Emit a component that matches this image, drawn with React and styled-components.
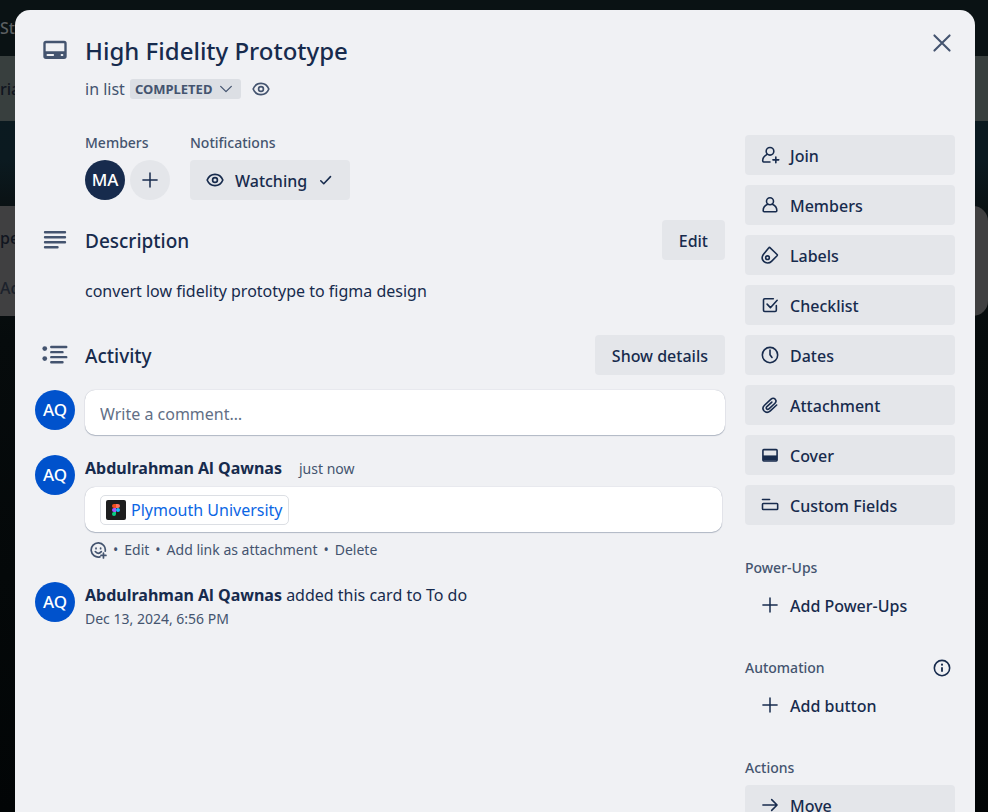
import React from "react";
import styled, { createGlobalStyle, css } from "styled-components";

const Global = createGlobalStyle`
  * { box-sizing: border-box; }
  body {
    margin: 0;
    background: #04090b;
    color: #172b4d;
    font-family: "Noto Sans", "Open Sans", sans-serif;
    font-size: 16px;
    line-height: 24px;
  }
  button, input, textarea { font: inherit; color: inherit; }
  h1, h2, h3, p { margin: 0; }
`;

/* ---------- board behind the dialog ---------- */

const Board = styled.div`
  height: 100vh;
  overflow: hidden;
  display: flex;
  flex-direction: column;
  background: linear-gradient(#0a1a20 0, #0b1a20 160px, #0a1113 210px, #060b0c 340px, #020506 100%);
  color: #10151f;
  font-weight: 500;
`;

const BoardNav = styled.div`
  height: 56px;
  display: flex;
  align-items: center;
  flex-shrink: 0;
  background: #0a1214;
  color: #5b5f61;
`;

const BoardHeader = styled.div`
  height: 65px;
  display: flex;
  align-items: center;
  flex-shrink: 0;
  background: #383f3e;
`;

const Lists = styled.div`
  display: flex;
  margin-top: 85px;
`;

const List = styled.div`
  flex: 1;
  height: 110px;
  display: flex;
  flex-direction: column;
  gap: 26px;
  padding-top: 20px;
  border-radius: 0 15px 15px 0;
  background: #404041;
`;

const ListAdd = styled.span`
  color: #1c222c;
`;

/* ---------- dialog ---------- */

const Backdrop = styled.div`
  position: fixed;
  inset: 0;
  overflow-y: auto;
  scrollbar-width: none;
  padding: 10px 13px 60px 15px;
`;

const Dialog = styled.section`
  max-width: 960px;
  margin: 0 auto;
  padding: 20px;
  border-radius: 15px;
  background: #f0f1f4;
`;

const Header = styled.header`
  display: grid;
  grid-template-columns: 50px 1fr auto;
`;

const IconCell = styled.div`
  width: 40px;
  height: 40px;
  display: flex;
  align-items: center;
  justify-content: center;
  color: #44546f;
`;

const Title = styled.h1`
  font-size: 24px;
  line-height: 30px;
  font-weight: 500;
  padding: 6px 0;
`;

const ListLine = styled.div`
  display: flex;
  align-items: center;
  height: 30px;
  margin-top: 2px;
  gap: 5px;
  color: #44546f;
`;

const ListButton = styled.button`
  display: flex;
  align-items: center;
  gap: 6px;
  height: 20px;
  padding: 0 7px 0 5px;
  border: 0;
  border-radius: 3px;
  background: #dcdfe4;
  color: #44546f;
  font-size: 13px;
  line-height: 20px;
  font-weight: 700;
`;

const IconButton = styled.button`
  display: flex;
  align-items: center;
  justify-content: center;
  width: ${(p) => p.$size}px;
  height: ${(p) => p.$size}px;
  padding: 0;
  border: 0;
  border-radius: 50%;
  background: ${(p) => (p.$filled ? "#e4e6ea" : "transparent")};
  color: ${(p) => (p.$dark ? "#172b4d" : "#44546f")};
`;

const Columns = styled.div`
  display: grid;
  grid-template-columns: minmax(0, 1fr) 210px;
  gap: 20px;
  padding-top: 31px;
`;

const Main = styled.div`
  display: flex;
  flex-direction: column;
`;

const Details = styled.div`
  display: flex;
  gap: 20px;
  padding-left: 50px;
  margin-bottom: 20px;
`;

const Label = styled.h3`
  font-size: 14px;
  line-height: 16px;
  font-weight: 500;
  color: #44546f;
`;

const DetailGroup = styled.div`
  display: flex;
  flex-direction: column;
  gap: 9px;
`;

const Inline = styled.div`
  display: flex;
  gap: 5px;
`;

const Avatar = styled.span`
  display: flex;
  align-items: center;
  justify-content: center;
  width: 40px;
  height: 40px;
  flex-shrink: 0;
  border-radius: 50%;
  background: ${(p) => (p.$navy ? "#172b4d" : "#0052cc")};
  color: #fff;
  font-size: 17px;
  font-weight: 500;
`;

const buttonBase = css`
  display: flex;
  align-items: center;
  gap: 10px;
  height: 40px;
  padding: 2px 15px 0;
  border: 0;
  border-radius: 4px;
  background: #e4e6ea;
  color: #172b4d;
  font-weight: 500;
  white-space: nowrap;
  svg { margin-bottom: 3px; }
`;

const Button = styled.button`
  ${buttonBase}
  ${(p) => p.$wide && "padding: 2px 17px 0;"}
`;

const SideButton = styled.button`
  ${buttonBase}
  width: 100%;
  ${(p) => p.$plain && "background: transparent;"}
`;

const Section = styled.section`
  display: grid;
  grid-template-columns: 50px minmax(0, 1fr);
`;

const SectionHead = styled.div`
  display: flex;
  align-items: center;
  justify-content: space-between;
  min-height: 40px;
`;

const SectionTitle = styled.h2`
  font-size: 19px;
  line-height: 26px;
  font-weight: 500;
  padding-top: 2px;
`;

const Description = styled.p`
  grid-column: 2;
  padding: 19px 0 32px;
`;

const Entry = styled.div`
  display: grid;
  grid-template-columns: 50px minmax(0, 1fr);
  margin-top: ${(p) => p.$top}px;
`;

const CommentInput = styled.input`
  width: 100%;
  height: 45px;
  padding: 2px 15px 0;
  border: 0;
  border-radius: 10px;
  background: #fff;
  box-shadow: 0 1px 1px #091e4240, 0 0 1px #091e424f;
  &::placeholder { color: #626f86; opacity: 1; }
`;

const Byline = styled.p`
  line-height: 27px;
`;

const Name = styled.strong`
  font-weight: 700;
`;

const Time = styled.a`
  display: ${(p) => (p.$block ? "block" : "inline")};
  margin-left: ${(p) => (p.$block ? 0 : 17)}px;
  font-size: 14px;
  line-height: 20px;
  color: #44546f;
  text-decoration: none;
`;

const CommentBox = styled.div`
  display: flex;
  align-items: center;
  height: 45px;
  margin: 5px 3px 0 0;
  padding: 0 15px;
  border-radius: 10px;
  background: #fff;
  box-shadow: 0 1px 1px #091e4240, 0 0 1px #091e424f;
`;

const SmartLink = styled.a`
  display: flex;
  align-items: center;
  gap: 5px;
  height: 30px;
  padding: 0 5px;
  border: 1px solid #dcdfe4;
  border-radius: 5px;
  color: #0c66e4;
  text-decoration: none;
`;

const Actions = styled.div`
  display: flex;
  align-items: center;
  gap: 6px;
  height: 20px;
  margin-top: 8px;
  padding-left: 5px;
  font-size: 14px;
  line-height: 20px;
  color: #44546f;
`;

const TextButton = styled.button`
  display: flex;
  padding: 0;
  border: 0;
  background: none;
  color: #44546f;
  white-space: nowrap;
`;

const Sidebar = styled.aside`
  display: flex;
  flex-direction: column;
  gap: 33px;
`;

const SideGroup = styled.div`
  display: flex;
  flex-direction: column;
  gap: ${(p) => p.$gap}px;
`;

const SideHead = styled.div`
  display: flex;
  align-items: center;
  justify-content: space-between;
  height: 20px;
`;

/* ---------- icons ---------- */

const Svg = ({ size = 20, width = 1.9, children }) => (
  <svg width={size} height={size} viewBox="0 0 24 24" fill="none" stroke="currentColor"
    strokeWidth={width} strokeLinecap="round" strokeLinejoin="round" aria-hidden="true">
    {children}
  </svg>
);

const CardIcon = () => (
  <Svg size={30}>
    <rect x="3.6" y="5.6" width="16.8" height="12.6" rx="1.2" />
    <path d="M4 13h16v5H4z" fill="currentColor" stroke="none" />
    <path d="M6 16h4.5M17.3 16h.6" stroke="#f0f1f4" strokeWidth="1.6" />
  </Svg>
);
const LinesIcon = () => (
  <Svg size={30} width={1.9}><path d="M4 5.8h16M4 9.8h16M4 13.8h16M4 17.8h10" /></Svg>
);
const ActivityIcon = () => (
  <Svg size={30} width={1.9}>
    <path d="M9 5.6h12M9 9.7h9M9 13.7h12M9 17.8h9" />
    <circle cx="3.8" cy="6.8" r="1.9" fill="currentColor" stroke="none" />
    <circle cx="3.8" cy="14.8" r="1.9" fill="currentColor" stroke="none" />
  </Svg>
);
const EyeIcon = () => (
  <Svg width={2}>
    <path d="M2.6 12C4.2 8 7.6 5.2 12 5.2S19.8 8 21.4 12C19.8 16 16.4 18.8 12 18.8S4.2 16 2.6 12Z" />
    <circle cx="12" cy="12" r="2.9" />
  </Svg>
);
const CheckIcon = () => <Svg size={18} width={2.1}><path d="M5 13l4 4 9-9.500" /></Svg>;
const ChevronIcon = () => <Svg size={16} width={1.9}><path d="M4 8l8 8 8-8" /></Svg>;
const PlusIcon = () => <Svg width={1.8}><path d="M12 3.5v17M3.5 12h17" /></Svg>;
const CloseIcon = () => <Svg size={30}><path d="M5 5l14 14M19 5L5 19" /></Svg>;
const MembersIcon = () => (
  <Svg>
    <circle cx="12" cy="7.500" r="4.200" />
    <path d="M9.2 11C6.2 12.3 3.8 15.2 3.8 18.5Q3.8 20 5 20H19Q20.2 20 20.2 18.5C20.2 15.2 17.8 12.3 14.8 11" />
  </Svg>
);
const JoinIcon = () => (
  <Svg>
    <circle cx="12" cy="7.5" r="4.6" />
    <path d="M8.5 11.2C5.5 12.8 3.2 15.5 3.2 19Q3.2 20.3 4.5 20.3H12M19 14.3v7M15.5 17.8h7" />
  </Svg>
);
const LabelIcon = () => (
  <Svg>
    <path d="M11.600 2.900L20.5 11.4Q21.2 12.1 20.5 12.9L13.8 19.6C11.2 22.2 7 22.2 4.5 19.7C2.2 17.3 2.2 14 4 11.5L10.6 3.3Q11.1 2.6 11.6 2.9Z" />
    <circle cx="9" cy="15.2" r="2.2" />
  </Svg>
);
const ChecklistIcon = () => (
  <Svg>
    <path d="M16 4.4H5.7Q4.2 4.4 4.2 5.9V18.3Q4.2 19.8 5.7 19.8H18.1Q19.6 19.8 19.6 18.3V12.5M8.5 11l4 4.2L20.6 6.3" />
  </Svg>
);
const ClockIcon = () => (
  <Svg><circle cx="12" cy="12" r="9.2" /><path d="M12 6V11.8L14.4 15" /></Svg>
);
const ClipIcon = () => (
  <Svg>
    <path d="M20 12L12.4 19C9.8 21.3 6.9 21.1 5 19.2C3.1 17.2 3.1 14.5 5.4 12.3L12.9 5.3C14.8 3.6 16.9 3.7 18.2 5C19.6 6.5 19.5 8.5 17.7 10.2L10.7 16.6C9.7 17.5 8.6 17.4 8 16.7C7.2 15.9 7.3 14.8 8.3 13.9L14.2 8.5" />
  </Svg>
);
const CoverIcon = () => (
  <Svg>
    <rect x="3.5" y="5.5" width="17" height="13.6" rx="1" />
    <path d="M3.5 12.5h17v6h-17z" fill="currentColor" stroke="none" />
  </Svg>
);
const FieldsIcon = () => (
  <Svg><path d="M3 5.4h8.5" /><rect x="3" y="10.2" width="18.2" height="7.2" rx="1" /></Svg>
);
const InfoIcon = () => (
  <Svg>
    <circle cx="12" cy="12" r="9.2" />
    <path d="M12 11v5.5" strokeWidth="2.2" strokeLinecap="butt" />
    <circle cx="12" cy="8" r="1.3" fill="currentColor" stroke="none" />
  </Svg>
);
const ArrowIcon = () => <Svg><path d="M3.5 12h17M14 5.5l6.5 6.5-6.5 6.5" /></Svg>;
const EmojiIcon = () => (
  <Svg size={17} width={2.4}>
    <path d="M14 21A10 10 0 1 1 21.5 13M7.5 13.5Q11.500 18.5 16 13.5M19 15.5v7M15.5 19h7M8.5 8.5v1M15 8.5v1" />
  </Svg>
);
const FigmaIcon = () => (
  <svg width="20" height="20" viewBox="0 0 20 20" aria-hidden="true">
    <rect width="20" height="20" rx="2" fill="#1e1e1e" />
    <path d="M10 4H8a2 2 0 0 0 0 4h2z" fill="#f24e1e" />
    <path d="M10 4h2a2 2 0 0 1 0 4h-2z" fill="#ff7262" />
    <path d="M10 8H8a2 2 0 0 0 0 4h2z" fill="#a259ff" />
    <circle cx="12" cy="10" r="2" fill="#1abcfe" />
    <path d="M10 12H8a2 2 0 1 0 2 2z" fill="#0acf83" />
  </svg>
);

const CARD_ACTIONS = [
  ["Join", JoinIcon],
  ["Members", MembersIcon],
  ["Labels", LabelIcon],
  ["Checklist", ChecklistIcon],
  ["Dates", ClockIcon],
  ["Attachment", ClipIcon],
  ["Cover", CoverIcon],
  ["Custom Fields", FieldsIcon],
];

export default function App() {
  return (
    <>
      <Global />
      <Board>
        <BoardNav>Sta</BoardNav>
        <BoardHeader>ria</BoardHeader>
        <Lists>
          <List><span>pe</span><ListAdd>Add</ListAdd></List>
        </Lists>
      </Board>
      <Backdrop>
        <Dialog role="dialog" aria-labelledby="card-title">
          <Header>
            <IconCell><CardIcon /></IconCell>
            <div>
              <Title id="card-title">High Fidelity Prototype</Title>
              <ListLine>
                <span>in list</span>
                <ListButton>COMPLETED <ChevronIcon /></ListButton>
                <IconButton $size={30} aria-label="Watching this card"><EyeIcon /></IconButton>
              </ListLine>
            </div>
            <IconButton $size={26} aria-label="Close"><CloseIcon /></IconButton>
          </Header>
          <Columns>
            <Main>
              <Details>
                <DetailGroup>
                  <Label>Members</Label>
                  <Inline>
                    <Avatar $navy>MA</Avatar>
                    <IconButton $size={40} $filled $dark aria-label="Add member"><PlusIcon /></IconButton>
                  </Inline>
                </DetailGroup>
                <DetailGroup>
                  <Label>Notifications</Label>
                  <Button><EyeIcon />Watching<CheckIcon /></Button>
                </DetailGroup>
              </Details>
              <Section>
                <IconCell><LinesIcon /></IconCell>
                <SectionHead>
                  <SectionTitle>Description</SectionTitle>
                  <Button $wide>Edit</Button>
                </SectionHead>
                <Description>convert low fidelity prototype to figma design</Description>
              </Section>
              <Section>
                <IconCell><ActivityIcon /></IconCell>
                <SectionHead>
                  <SectionTitle>Activity</SectionTitle>
                  <Button $wide>Show details</Button>
                </SectionHead>
              </Section>
              <Entry $top={15}>
                <Avatar>AQ</Avatar>
                <CommentInput aria-label="Write a comment" placeholder="Write a comment…" />
              </Entry>
              <Entry $top={20}>
                <Avatar>AQ</Avatar>
                <div>
                  <Byline><Name>Abdulrahman Al Qawnas</Name><Time href="#comment">just now</Time></Byline>
                  <CommentBox>
                    <SmartLink href="#figma"><FigmaIcon />Plymouth University</SmartLink>
                  </CommentBox>
                  <Actions>
                    <TextButton aria-label="Add reaction"><EmojiIcon /></TextButton>
                    <span>•</span>
                    <TextButton>Edit</TextButton>
                    <span>•</span>
                    <TextButton>Add link as attachment</TextButton>
                    <span>•</span>
                    <TextButton>Delete</TextButton>
                  </Actions>
                </div>
              </Entry>
              <Entry $top={22}>
                <Avatar>AQ</Avatar>
                <div>
                  <Byline><Name>Abdulrahman Al Qawnas</Name> added this card to To do</Byline>
                  <Time $block href="#added">Dec 13, 2024, 6:56 PM</Time>
                </div>
              </Entry>
            </Main>
            <Sidebar>
              <SideGroup $gap={10}>
                {CARD_ACTIONS.map(([label, Icon]) => (
                  <SideButton key={label}><Icon />{label}</SideButton>
                ))}
              </SideGroup>
              <SideGroup $gap={7}>
                <SideHead><Label>Power-Ups</Label></SideHead>
                <SideButton $plain><PlusIcon />Add Power-Ups</SideButton>
              </SideGroup>
              <SideGroup $gap={7}>
                <SideHead>
                  <Label>Automation</Label>
                  <IconButton $size={26} $dark aria-label="About automation"><InfoIcon /></IconButton>
                </SideHead>
                <SideButton $plain><PlusIcon />Add button</SideButton>
              </SideGroup>
              <SideGroup $gap={7}>
                <SideHead><Label>Actions</Label></SideHead>
                <SideButton><ArrowIcon />Move</SideButton>
              </SideGroup>
            </Sidebar>
          </Columns>
        </Dialog>
      </Backdrop>
    </>
  );
}
